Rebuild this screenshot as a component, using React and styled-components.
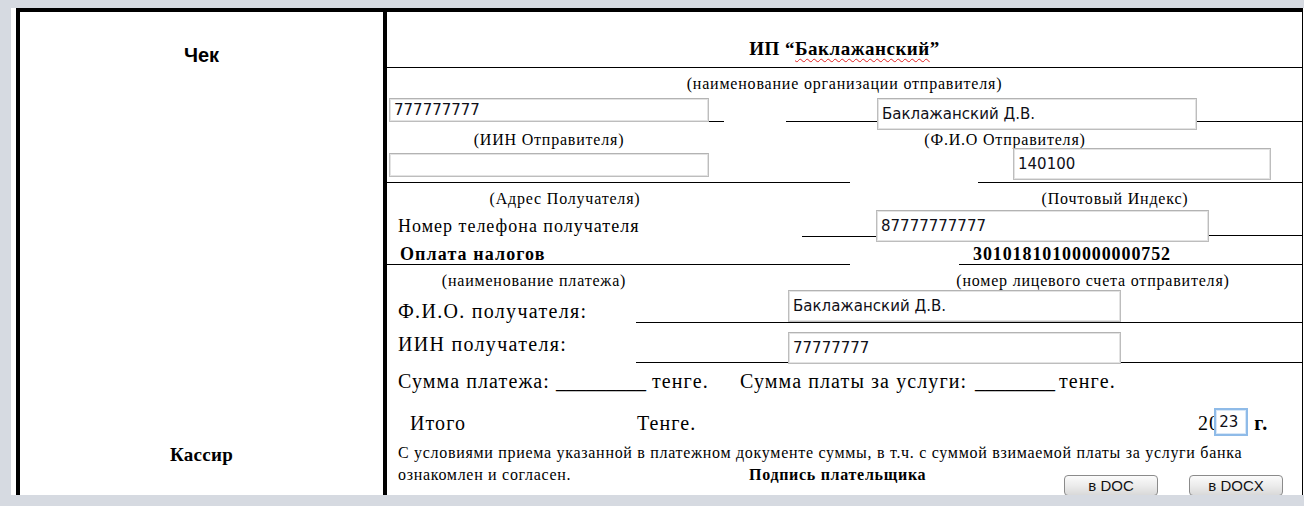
import React from "react";
import styled, { createGlobalStyle } from "styled-components";

const GlobalStyle = createGlobalStyle`
  body {
    margin: 0;
    background: #d6dae1;
    font-family: "Liberation Serif", "Times New Roman", serif;
    color: #000;
  }
`;

const Page = styled.div`
  margin: 8px 0 0 11px;
  padding-left: 5px;
  height: 487px;
  background: #fff;
  overflow: hidden;
`;

const Sheet = styled.div`
  display: grid;
  grid-template-columns: 371px 916px;
  border-top: 4px solid #000;
  width: max-content;
`;

const SideCell = styled.div`
  display: flex;
  flex-direction: column;
  align-items: center;
  height: 520px;
  border-left: 4px solid #000;
  border-right: 4px solid #000;
`;

const CheckTitle = styled.div`
  margin-top: 33px;
  font: bold 20px "Liberation Sans", Arial, sans-serif;
  line-height: 20px;
`;

const Cashier = styled.div`
  margin-top: 380px;
  font-weight: bold;
  font-size: 19px;
  line-height: 20px;
  letter-spacing: 0.3px;
`;

const MainCell = styled.div`
  border-right: 1px solid #000;
  height: 520px;
`;

const TitleRow = styled.div`
  height: 37px;
  padding-top: 18px;
  border-bottom: 1px solid #000;
  display: flex;
  align-items: center;
  justify-content: center;
  font-weight: bold;
  font-size: 19px;
  letter-spacing: 0.5px;
`;

const Squiggle = styled.span`
  text-decoration: underline wavy #e02020;
  text-decoration-thickness: 1px;
  text-underline-offset: 3px;
`;

const Row = styled.div`
  display: flex;
  align-items: flex-start;
  height: ${(p) => p.$h}px;
  padding-top: ${(p) => p.$pt || 0}px;
  box-sizing: border-box;
`;

const Caption = styled.div`
  width: ${(p) => (p.$w ? `${p.$w}px` : "auto")};
  flex: ${(p) => (p.$w ? "none" : "1")};
  margin-left: ${(p) => p.$ml || 0}px;
  text-align: center;
  font-size: 16px;
  letter-spacing: 0.8px;
  line-height: 17px;
  white-space: nowrap;
`;

const Lined = styled.div`
  display: flex;
  align-items: flex-start;
  width: ${(p) => (p.$w ? `${p.$w}px` : "auto")};
  flex: ${(p) => (p.$w ? "none" : "1")};
  height: ${(p) => p.$h}px;
  margin-left: ${(p) => p.$ml || 0}px;
  border-bottom: 1px solid #000;
`;

const Field = styled.input`
  box-sizing: border-box;
  width: ${(p) => p.$w}px;
  height: ${(p) => p.$h}px;
  margin: ${(p) => p.$mt || 0}px 0 0 ${(p) => p.$ml || 0}px;
  padding: 0 4px;
  border: 1px solid #bdbdbd;
  border-top-color: #b3b3b3;
  box-shadow: inset 0 0 0 1px #e3e3e3;
  background: #fff;
  color: #101018;
  font: 15px "DejaVu Sans", Verdana, sans-serif;
  outline: none;
  flex: none;
`;

const Label = styled.div`
  width: ${(p) => p.$w}px;
  flex: none;
  padding: ${(p) => p.$pt || 0}px 0 0 ${(p) => (p.$pl == null ? 11 : p.$pl)}px;
  box-sizing: border-box;
  font-size: ${(p) => p.$size || 18}px;
  letter-spacing: ${(p) => p.$ls || 1}px;
  font-weight: ${(p) => (p.$bold ? "bold" : "normal")};
  line-height: 20px;
  white-space: nowrap;
`;

const Line = styled.div`
  display: flex;
  align-items: ${(p) => p.$align || "baseline"};
  height: ${(p) => p.$h}px;
  padding: ${(p) => p.$pt}px 0 0 ${(p) => p.$pl}px;
  box-sizing: border-box;
  font-size: 20px;
  letter-spacing: 1.1px;
  line-height: 22px;
  white-space: nowrap;
`;

const Word = styled.span`
  display: inline-block;
  width: ${(p) => (p.$w ? `${p.$w}px` : "auto")};
  margin-left: ${(p) => p.$ml || 0}px;
  font-weight: ${(p) => (p.$bold ? "bold" : "normal")};
  flex: none;
`;

const Blank = styled.span`
  letter-spacing: 0;
`;

const YearField = styled.input`
  box-sizing: border-box;
  width: 34px;
  height: 28px;
  margin: -2px 0 0 -6px;
  padding: 0 3px;
  border: 2px solid #8fbbe8;
  box-shadow: inset 0 0 0 1px #d7e7f8;
  background: #fff;
  color: #101018;
  font: 15px "DejaVu Sans", Verdana, sans-serif;
  outline: none;
  position: relative;
`;

const Terms = styled.div`
  padding: 1px 0 0 11px;
  font-size: 16px;
  letter-spacing: 0.7px;
  line-height: 22px;
  white-space: nowrap;
`;

const TermsLast = styled.div`
  display: flex;
  align-items: flex-start;
  height: 22px;
`;

const Button = styled.button`
  width: 94px;
  height: 21px;
  margin: 11px 0 0 ${(p) => p.$ml || 0}px;
  border: 1px solid #8b8b8b;
  border-radius: 4px;
  background: linear-gradient(#fbfbfb, #ececec 50%, #d9d9d9);
  font: 15px "Liberation Sans", Arial, sans-serif;
  letter-spacing: 0;
  color: #111;
  padding: 0;
  line-height: 19px;
  flex: none;
`;

export default function App() {
  return (
    <>
      <GlobalStyle />
      <Page>
        <Sheet>
          <SideCell>
            <CheckTitle>Чек</CheckTitle>
            <Cashier>Кассир</Cashier>
          </SideCell>
          <MainCell>
            <TitleRow>
              ИП “<Squiggle>Баклажанский</Squiggle>”
            </TitleRow>

            <Row $h={29} $pt={7}>
              <Caption>(наименование организации отправителя)</Caption>
            </Row>

            <Row $h={34} $pt={1}>
              <Field $w={320} $h={24} $ml={2} defaultValue="777777777" />
              <Lined $w={15} $h={23} />
              <Lined $w={91} $h={23} $ml={62} />
              <Field $w={320} $h={32} defaultValue="Баклажанский Д.В." />
              <Lined $h={23} />
            </Row>

            <Row $h={16}>
              <Caption $w={320} $ml={2}>(ИИН Отправителя)</Caption>
              <Caption $w={320} $ml={136}>(Ф.И.О Отправителя)</Caption>
            </Row>

            <Row $h={36}>
              <Lined $w={463} $h={35}>
                <Field $w={320} $h={24} $ml={2} $mt={6} />
              </Lined>
              <Lined $h={35} $ml={128}>
                <Field $w={258} $h={32} $ml={35} $mt={1} defaultValue="140100" />
              </Lined>
            </Row>

            <Row $h={27} $pt={7}>
              <Caption $w={356}>(Адрес Получателя)</Caption>
              <Caption $w={300} $ml={222}>(Почтовый Индекс)</Caption>
            </Row>

            <Row $h={34}>
              <Label $w={415} $pt={6}>Номер телефона получателя</Label>
              <Lined $w={74} $h={26} />
              <Field $w={333} $h={32} defaultValue="87777777777" />
              <Lined $h={25} />
            </Row>

            <Row $h={21}>
              <Lined $w={463} $h={20}>
                <Label $w={300} $pl={13} $bold $ls={1.1} $pt={0}>
                  Оплата налогов
                </Label>
              </Lined>
              <Lined $h={20} $ml={109}>
                <Label $w={300} $pl={14} $bold $ls={0.9} $pt={0}>
                  30101810100000000752
                </Label>
              </Lined>
            </Row>

            <Row $h={25} $pt={7}>
              <Caption $w={294}>(наименование платежа)</Caption>
              <Caption $w={400} $ml={212}>(номер лицевого счета отправителя)</Caption>
            </Row>

            <Row $h={33}>
              <Label $w={249} $size={20} $ls={1.3} $pt={11}>Ф.И.О. получателя:</Label>
              <Lined $h={32}>
                <Field $w={333} $h={32} $ml={152} defaultValue="Баклажанский Д.В." />
              </Lined>
            </Row>

            <Row $h={40}>
              <Label $w={249} $size={20} $ls={1.3} $pt={11}>ИИН получателя:</Label>
              <Lined $h={39}>
                <Field $w={333} $h={32} $ml={152} $mt={9} defaultValue="77777777" />
              </Lined>
            </Row>

            <Line $h={37} $pt={7} $pl={11}>
              <Word $w={158}>Сумма платежа:</Word>
              <Blank>_________</Blank>
              <Word $w={88} $ml={6}>тенге.</Word>
              <Word $w={235}>Сумма платы за услуги:</Word>
              <Blank>________</Blank>
              <Word $ml={4}>тенге.</Word>
            </Line>

            <Line $h={41} $pt={5} $pl={23} $align="center">
              <Word $w={227}>Итого</Word>
              <Word $w={561}>Тенге.</Word>
              <Word>20</Word>
              <YearField defaultValue="23" />
              <Word $ml={6} $bold>г.</Word>
            </Line>

            <Terms>
              С условиями приема указанной в платежном документе суммы, в т.ч. с суммой взимаемой платы за услуги банка
              <TermsLast>
                <Word $w={351}>ознакомлен и согласен.</Word>
                <Word $w={315} $bold>Подпись плательщика</Word>
                <Button>в DOC</Button>
                <Button $ml={31}>в DOCX</Button>
              </TermsLast>
            </Terms>
          </MainCell>
        </Sheet>
      </Page>
    </>
  );
}
